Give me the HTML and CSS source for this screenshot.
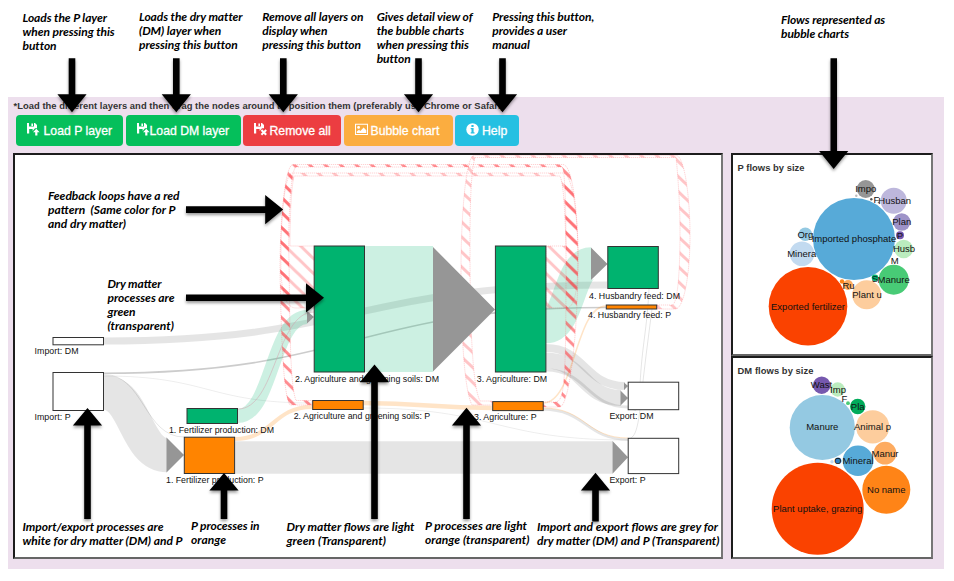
FILE: index.html
```html
<!DOCTYPE html>
<html lang="en">
<head>
<meta charset="utf-8">
<title>P and DM flows</title>
<link rel="stylesheet" href="styles.css">
</head>
<body>
<div class="page">
  <header class="notes">
    <p class="note n1">Loads the P layer<br>when pressing this<br>button</p>
    <p class="note n2">Loads the dry matter<br>(DM) layer when<br>pressing this button</p>
    <p class="note n3">Remove all layers on<br>display when<br>pressing this button</p>
    <p class="note n4">Gives detail view of<br>the bubble charts<br>when pressing this<br>button</p>
    <p class="note n5">Pressing this button,<br>provides a user<br>manual</p>
    <p class="note n6">Flows represented as<br>bubble charts</p>
  </header>
  <main class="app">
    <p class="hint">*Load the different layers and then drag the nodes around to position them (preferably use Chrome or Safari)</p>
    <div class="toolbar">
      <button class="btn green b1"><svg class="ico" viewBox="0 0 13 13"><path fill="#fff" fill-rule="evenodd" d="M0 0H2V3.6H7V0H8L10 2V5.2H8L5.6 8V6H2.2V10.5H0ZM4.4 .5H6V3H4.4Z"/><path fill="#fff" d="M9.3 5.8L12.6 9.3H10.4V12.4H8.2V9.3H6Z"/></svg><span>Load P layer</span></button>
      <button class="btn green b2"><svg class="ico" viewBox="0 0 13 13"><path fill="#fff" fill-rule="evenodd" d="M0 0H2V3.6H7V0H8L10 2V5.2H8L5.6 8V6H2.2V10.5H0ZM4.4 .5H6V3H4.4Z"/><path fill="#fff" d="M9.3 5.8L12.6 9.3H10.4V12.4H8.2V9.3H6Z"/></svg><span>Load DM layer</span></button>
      <button class="btn red b3"><svg class="ico" viewBox="0 0 13 13"><path fill="#fff" fill-rule="evenodd" d="M0 0H2V3.6H7V0H8L10 2V5.2H8L5.6 8V6H2.2V10.5H0ZM4.4 .5H6V3H4.4Z"/><path stroke="#fff" stroke-width="2" fill="none" d="M7.4 7L12.2 11.8M12.2 7L7.4 11.8"/></svg><span>Remove all</span></button>
      <button class="btn amber b4"><svg class="ico" viewBox="0 0 13 13"><path fill="#fff" fill-rule="evenodd" d="M0 .8H13V12H0ZM1 1.8V11H12V1.8Z"/><circle cx="3.6" cy="4.4" r="1.4" fill="#fff"/><path fill="#fff" d="M1.8 10V8.6L4 6.8L5.4 8L8.6 4.6L11.3 7.2V10Z"/></svg><span>Bubble chart</span></button>
      <button class="btn cyan b5"><svg class="ico" viewBox="0 0 13 13"><circle cx="6.5" cy="6.5" r="6.2" fill="#fff"/><path fill="#25c0e2" d="M5.4 2H7.6V4H5.4ZM4.7 5H7.6V9.2H8.5V10.4H4.7V9.2H5.5V6.2H4.7Z"/></svg><span>Help</span></button>
    </div>
    <div class="panels">
      <section class="panel sankey">
        <svg viewBox="15 155 706 402" width="706" height="402">
          <defs>
            <pattern id="hatch" width="15.5" height="15" patternUnits="userSpaceOnUse" patternTransform="translate(3 3)">
              <path d="M-4 -3.9L20 19.4M-4 11.1L4 18.9M11.5 -3.9L19.5 3.9" stroke="#ff2d35" stroke-opacity=".28" stroke-width="3"/>
            </pattern>
            <pattern id="hatch-strong" width="15.5" height="15" patternUnits="userSpaceOnUse" patternTransform="translate(3 3)">
              <path d="M-4 -3.9L20 19.4M-4 11.1L4 18.9M11.5 -3.9L19.5 3.9" stroke="#ff2d35" stroke-opacity=".55" stroke-width="3"/>
            </pattern>
          </defs>
          <g class="grey">
            <path stroke-width="7" d="M104 341C356 341 356 285 607 285"/>
            <path stroke-width="1.6" stroke-opacity=".2" d="M104 373.3C355 373 355 307.5 606 307.5"/>
            <path stroke-width=".7" d="M104 376C208 376 208 403 312 403"/>
            <path stroke-width="34.5" d="M104 392.5C135.500 392.500 135.500 455 167 455"/>
            <path stroke-width="1" d="M104 374.500C144 374.500 144 437 184 437"/>
            <path stroke-width="32.500" d="M235 457.400H612.500"/>
            <path stroke-width=".7" d="M363 408C495 408 495 440 628 440"/>
            <path stroke-width="8" d="M546 348C585 348 585 386 625 386"/>
            <path stroke-width="16" d="M546 360.500C583 360.500 583 398 621 398"/>
            <path stroke-width="3" d="M546 370C587 370 587 407 628 407"/>
            <path stroke-width="2.500" d="M543 409.500C586 409.500 586 439.500 628 439.500"/>
            <path stroke-width="1" d="M649 289C647 330 642 345 640 385S634 405 628 408"/>
            <path stroke-width="1" d="M652 309C648 340 644 370 641 400S635 438 628 439"/>
          </g>
          <g class="green-flow">
            <path stroke-width="14" d="M238 416C272 416 272 317 307 317"/>
            <path stroke-width="126" d="M365 309H433"/>
            <path stroke-width="32.500" d="M546 327C569 327 569 263.500 591 263.500"/>
          </g>
          <g class="orange-flow">
            <path stroke-width="4" d="M235 439C273 439 273 407 312 407"/>
            <path stroke-width="4.500" d="M363 403C428 403 428 408 492 408"/>
            <path stroke-width="1.500" d="M543 403C575 403 575 306 606 306"/>
            <path stroke-width="1" d="M543 408C586 408 586 438 628 438"/>
          </g>
          <path class="pink" d="M238 409C276 409 276 312 314 312"/>
          <g class="loop">
            <path d="M546 246H566C565 215 564 185 560 176H294C291 190 290 220 290 246H314V308H296C285 308 280 290 281 255C281 215 285 173 292 173H563C573 173 578 220 578 255C578 290 575 308 566 308H546Z"/>
            <path class="strong" d="M543 402H556C565 400 566 380 566 250C566 210 565 168 562 167H296C290 170 288 230 289 260C290 330 290 385 296 400.500H312V405H290C283 395 281 330 280 270C280 220 285 164.500 293 164.500H563C573 165 578 215 578 260C578 330 570 404 560 407H543Z"/>
            <path d="M657 305H672C678 304 680 270 680 230C680 200 677 165 676 157.500H475C470 175 470 220 470 250C470 320 472 385 480 401H492V405H472C464 390 461 330 461 270C461 215 466 155.500 474 155.300H676C685 156 690 200 690 235C690 275 684 307 676 309H657Z"/>
          </g>
          <g class="heads">
            <path d="M166.500 437.500L184 455L166.500 472.500ZM307 311L314 317L307 323.500ZM433 247L495 309.500L433 371.500ZM591 247.500L607.500 264L591 280ZM624 382.500L628 386L624 390ZM620.500 390.500L628 398L620.500 405.500ZM612.500 441L628 457.300L612.500 473.700Z"/>
          </g>
          <g class="nodes">
            <rect class="w" x="53" y="337.500" width="50.500" height="7.300"/>
            <rect class="w" x="53" y="372.500" width="50.500" height="38"/>
            <rect class="g" x="187" y="408.500" width="50.500" height="15"/>
            <rect class="o" x="184.300" y="437.200" width="50.300" height="36.300"/>
            <rect class="g" x="314.200" y="246" width="50.300" height="126"/>
            <rect class="o" x="312.700" y="400.500" width="50.500" height="9"/>
            <rect class="g" x="495.400" y="246" width="50.500" height="126"/>
            <rect class="o" x="492.700" y="401.600" width="50.500" height="9"/>
            <rect class="g" x="607.800" y="246.500" width="50.500" height="42"/>
            <rect class="o" x="606.300" y="305" width="50.400" height="4"/>
            <rect class="w" x="628.200" y="382.200" width="50.500" height="27.500"/>
            <rect class="w" x="628.200" y="438.300" width="50.500" height="35.300"/>
          </g>
          <g class="labels">
            <text x="34.500" y="354" textLength="44">Import: DM</text>
            <text x="34.500" y="419.500" textLength="36">Import: P</text>
            <text x="169" y="433" textLength="105">1. Fertilizer production: DM</text>
            <text x="166" y="482.500" textLength="97.500">1. Fertilizer production: P</text>
            <text x="295" y="382" textLength="144">2. Agriculture and greening soils: DM</text>
            <text x="293.700" y="418.500" textLength="136.500">2. Agriculture and greening soils: P</text>
            <text x="476.700" y="382" textLength="70.500">3. Agriculture: DM</text>
            <text x="474" y="420" textLength="62.500">3. Agriculture: P</text>
            <text x="589" y="298.500" textLength="91">4. Husbandry feed: DM</text>
            <text x="588" y="318" textLength="83">4. Husbandry feed: P</text>
            <text x="609.500" y="419" textLength="44">Export: DM</text>
            <text x="609.500" y="482.500" textLength="36">Export: P</text>
          </g>
          <g class="callouts">
            <text x="48" y="200" textLength="131.500">Feedback loops have a red</text>
            <text x="48" y="214" textLength="127.500">pattern&#160; (Same color for P</text>
            <text x="48" y="228" textLength="78">and dry matter)</text>
            <text x="107.500" y="288" textLength="54">Dry matter</text>
            <text x="107.500" y="302" textLength="67">processes are</text>
            <text x="107.500" y="316" textLength="28">green</text>
            <text x="107.500" y="330" textLength="66.500">(transparent)</text>
            <text x="22.500" y="531" textLength="141">Import/export processes are</text>
            <text x="22.500" y="545" textLength="160">white for dry matter (DM) and P</text>
            <text x="191" y="530" textLength="68.500">P processes in</text>
            <text x="191" y="544" textLength="35">orange</text>
            <text x="286.500" y="531" textLength="128">Dry matter flows are light</text>
            <text x="286.500" y="545" textLength="99.500">green (Transparent)</text>
            <text x="425" y="530" textLength="102">P processes are light</text>
            <text x="425" y="544" textLength="104.500">orange (transparent)</text>
            <text x="537" y="531" textLength="181">Import and export flows are grey for</text>
            <text x="537" y="545" textLength="182.500">dry matter (DM) and P (Transparent)</text>
          </g>
        </svg>
      </section>
      <div class="side">
        <section class="panel bubbles">
          <svg viewBox="733 155 198 199" width="198" height="199">
            <text class="title" x="737.500" y="170.500" textLength="67">P flows by size</text>
            <circle cx="854" cy="239" r="41" fill="#57aad8"/><circle cx="808" cy="306.300" r="39.300" fill="#fa4200"/>
            <circle cx="865.700" cy="189" r="9" fill="#969696"/><circle cx="893.700" cy="200.700" r="13" fill="#bdb7dc"/>
            <circle cx="901.700" cy="222" r="8.700" fill="#9e93c8"/><circle cx="900" cy="235.300" r="4" fill="#7658ae"/>
            <circle cx="903.700" cy="249" r="9.300" fill="#bbecbe"/><circle cx="893.700" cy="279.700" r="15" fill="#48cb76"/>
            <circle cx="875" cy="277.700" r="3.300" fill="#00b372"/><circle cx="866.700" cy="294.700" r="14.500" fill="#fdcd9d"/>
            <circle cx="848" cy="285" r="5" fill="#fdab60"/><circle cx="842" cy="281.500" r="2.200" fill="#ff8417"/>
            <circle cx="805.300" cy="234.300" r="6.800" fill="#94c9e2"/><circle cx="802" cy="253.700" r="12.300" fill="#c2daf0"/>
            <circle cx="856.300" cy="195.700" r="1.200" fill="#bbb"/><circle cx="871.300" cy="199.300" r="1.200" fill="#555"/><circle cx="878.500" cy="202.500" r=".8" fill="#777"/>
            <g class="names">
              <text x="865.700" y="192.300">Impo</text><text x="876.500" y="203.300">F</text><text x="894.700" y="203.700">Husban</text>
              <text x="901.700" y="225.300">Plan</text><text x="900" y="238.500">P</text><text x="904" y="252.300">Husb</text>
              <text x="894.700" y="263.500">M</text><text x="875" y="281.500">S</text><text x="893.700" y="283">Manure</text>
              <text x="867" y="297.500">Plant u</text><text x="848.500" y="288.500">Ru</text><text x="805.300" y="237.500">Org</text>
              <text x="801.700" y="257">Minera</text><text x="854" y="242.300">Imported phosphate</text><text x="808" y="309.500">Exported fertilizer</text>
            </g>
          </svg>
        </section>
        <section class="panel bubbles">
          <svg viewBox="733 359 198 198" width="198" height="198">
            <text class="title" x="737.500" y="374.500" textLength="76">DM flows by size</text>
            <circle cx="822.300" cy="428.500" r="32.600" fill="#94c9e2"/><circle cx="817.700" cy="509.800" r="46" fill="#fa4200"/>
            <circle cx="821.700" cy="386.200" r="8.700" fill="#7658ae"/><circle cx="837.700" cy="390.500" r="7.200" fill="#bbecbe"/>
            <circle cx="848" cy="404.200" r="1.900" fill="#48cb76"/><circle cx="857.700" cy="407.500" r="7.700" fill="#00ab5b"/>
            <circle cx="872.700" cy="427.800" r="16.600" fill="#fdcd9d"/><circle cx="885" cy="454.200" r="11.400" fill="#fdab60"/>
            <circle cx="858" cy="461.800" r="15.300" fill="#57aad8"/><circle cx="886.300" cy="490.800" r="24" fill="#ff8417"/>
            <circle cx="838" cy="461.500" r="3" fill="#2d7dbd"/><circle cx="832" cy="462.800" r="1.700" fill="#c2daf0"/>
            <g class="names">
              <text x="821.500" y="389.300">Wast</text><text x="838" y="393.800">Imp</text><text x="844.500" y="402.700">F</text><text x="857.700" y="411">Pla</text>
              <text x="822.300" y="431.300">Manure</text><text x="872.500" y="431.300">Animal p</text><text x="885" y="457.600">Manur</text>
              <text x="838" y="465">O</text><text x="858" y="465">Mineral</text><text x="886.300" y="493.700">No name</text><text x="817.700" y="512.700">Plant uptake, grazing</text>
            </g>
          </svg>
        </section>
      </div>
    </div>
  </main>
  <svg class="arrows" viewBox="0 0 954 581" width="954" height="581">
    <defs>
      <path id="short" d="M-3.300 -54H3.300V-18H14.600L0 0L-14.600 -18H-3.300Z"/>
    </defs>
    <use href="#short" x="72" y="112.300"/><use href="#short" x="176.300" y="112.300"/><use href="#short" x="283.300" y="112.300"/>
    <use href="#short" x="418.500" y="112.300"/><use href="#short" x="502.500" y="112.300"/>
    <path d="M830.500 58.300H837V151H848.300L833.700 169L819.100 151H830.500Z"/>
    <path d="M186 206.300V212.900H265.200V224.200L283.200 209.600L265.200 195V206.300Z"/>
    <path d="M186 294.500V301.100H306V312.400L324 297.800L306 283.200V294.500Z"/>
    <path d="M84.200 519H90.800V425.500H102.100L87.500 408L72.900 425.500H84.200Z"/>
    <path d="M220.700 519H227.300V490.500H238.600L224 473L209.400 490.500H220.700Z"/>
    <path d="M371.200 519H377.800V382.300H389.100L374.500 364.500L359.900 382.300H371.200Z"/>
    <path d="M463.200 519H469.800V425.500H481.100L466.500 407.700L451.900 425.500H463.200Z"/>
    <path d="M592.200 521.500H598.800V490.500H610.100L595.500 472.700L580.900 490.500H592.200Z"/>
  </svg>
</div>
</body>
</html>
```
FILE: styles.css
```css
* { box-sizing: border-box; }
body { margin: 0; background: #fff; font-family: "Liberation Sans", Arial, sans-serif; }
p { margin: 0; }
svg { display: block; }
.page { position: relative; width: 954px; height: 581px; overflow: hidden; }

.notes { display: flex; height: 97px; padding: 9.500px 0 0 22.500px; }
.note { flex: none; white-space: nowrap; font: italic 700 12px/14px Lato, sans-serif; letter-spacing: -.06px; color: #000; }
.n1 { width: 116.500px; padding-top: 1px; }
.n2 { width: 123.300px; }
.n3 { width: 114.400px; }
.n4 { width: 115.600px; }
.n5 { width: 288.700px; }
.n6 { padding-top: 3px; }

.app { width: 936px; height: 472px; margin-left: 8px; background: #eddfed; }
.hint { height: 18px; padding: 2px 0 0 5.500px; font-weight: 700; font-size: 9.400px; line-height: 14px; letter-spacing: .045px; white-space: nowrap; color: #333; }
.toolbar { display: flex; gap: 2.500px; padding-left: 8px; height: 31px; }
.btn { display: flex; align-items: center; height: 31px; padding: 0 0 0 11px; border: 0; border-radius: 4px; color: #fff; font: 12.250px "Liberation Sans", Arial, sans-serif; -webkit-text-stroke: .3px #fff; white-space: nowrap; }
.ico { width: 13px; height: 13px; flex: none; margin-top: -2px; }
.green { background: #05bf5b; }
.red { background: #ec3d41; }
.amber { background: #fbad40; }
.cyan { background: #25c0e2; }
.b1 { width: 107px; gap: 3.500px; }
.b2 { width: 115px; }
.b3 { width: 98px; gap: 2.500px; }
.b4 { width: 109px; gap: 3px; }
.b5 { width: 64px; gap: 3px; }

.panels { display: flex; gap: 8px; padding: 7px 0 0 5px; }
.side { display: flex; flex-direction: column; }
.panel { border: 2px solid #1c1c1c; border-right-color: #767676; border-bottom-color: #666; background: #fff; }
.sankey { width: 710px; height: 406px; }
.bubbles { width: 202px; height: 203px; }
.grey { fill: none; stroke: #000; stroke-opacity: .1; }
.green-flow path { fill: none; stroke: #00b36f; stroke-opacity: .2; }
.orange-flow path { fill: none; stroke: #ff8400; stroke-opacity: .22; }
.pink { fill: none; stroke: #d59aa8; stroke-opacity: .6; stroke-width: .8; }
.loop path { fill: url(#hatch); stroke: #ff5a60; stroke-opacity: .4; stroke-width: .7; stroke-dasharray: 1.200 .8; }
.loop .strong { fill: url(#hatch-strong); }
.heads path { fill: #969696; }
.nodes rect { stroke: #333; stroke-width: 1; }
.nodes .w { fill: #fff; }
.nodes .g { fill: #00b36f; }
.nodes .o { fill: #ff8400; }
.labels text { font-size: 8.800px; fill: #111; }
.callouts text { font: italic 700 12px Lato, sans-serif; fill: #000; }
.title { font-size: 9.400px; font-weight: 700; fill: #333; }
.names text { font-size: 9.500px; fill: #111; text-anchor: middle; }
.arrows { position: absolute; left: 0; top: 0; pointer-events: none; filter: drop-shadow(0 2px 1.500px rgba(0, 0, 0, .4)); }
```
